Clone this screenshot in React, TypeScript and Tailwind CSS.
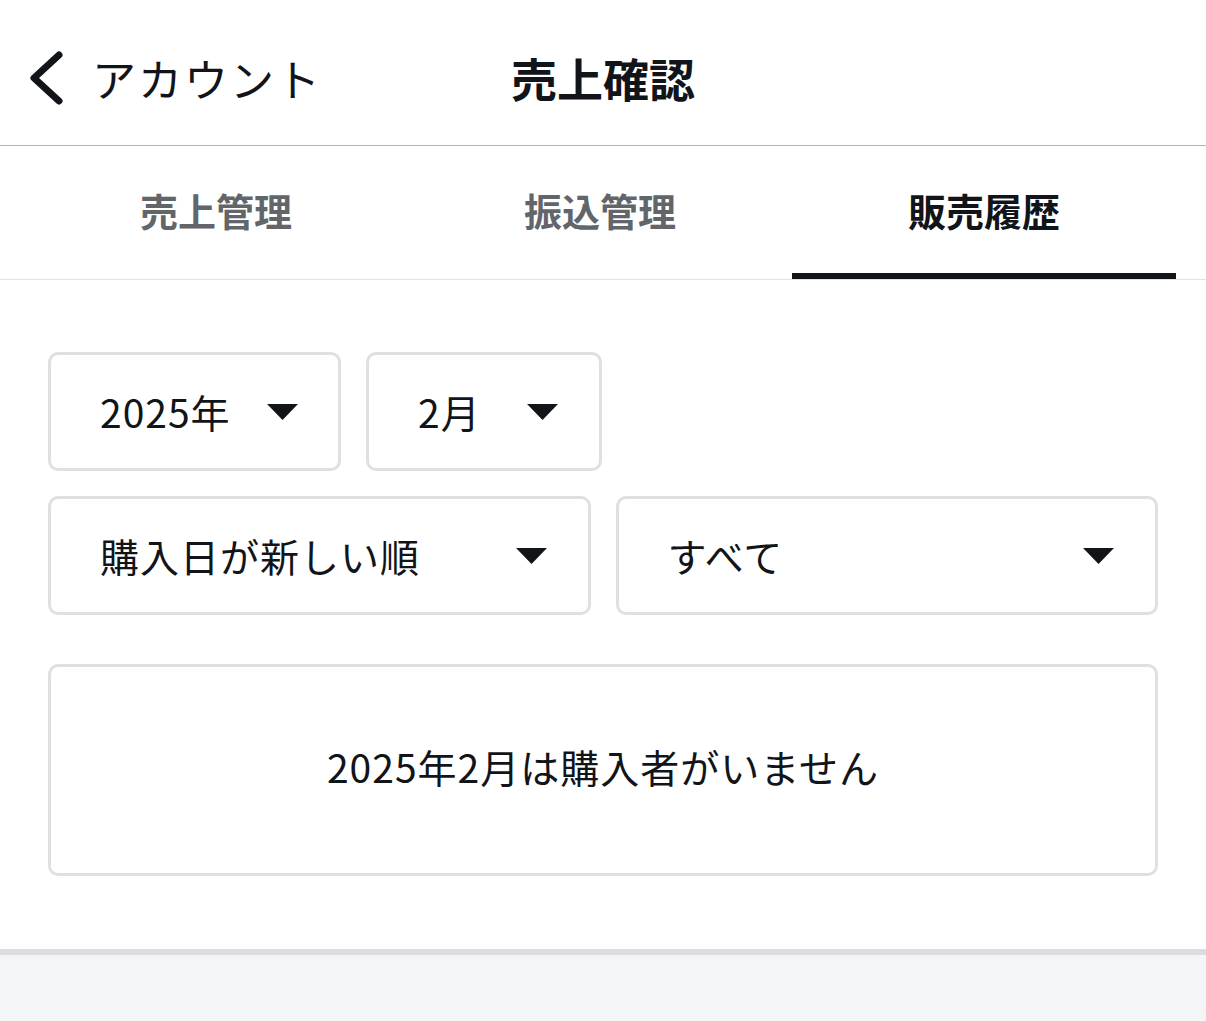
import { useState } from 'react';

const TABS = ['売上管理', '振込管理', '販売履歴'];

function Caret() {
  return (
    <svg width="31" height="16" viewBox="0 0 31 16" className="shrink-0">
      <path d="M0 0h31L15.5 16z" fill="#111418" />
    </svg>
  );
}

function Select({ label, className }: { label: string; className: string }) {
  return (
    <button
      className={`flex items-center justify-between rounded-[10px] border-[3px] border-[#e0e0e0] bg-white pl-[49px] text-[39px] text-[#111418] ${className}`}
    >
      <span className="leading-none tracking-[1px]">{label}</span>
      <Caret />
    </button>
  );
}

export default function App() {
  const [tab, setTab] = useState(2);

  return (
    <div className="flex min-h-[1021px] flex-col bg-white font-['Hiragino_Sans','Noto_Sans_CJK_JP',sans-serif]">
      {/* header */}
      <header className="grid h-[146px] grid-cols-[1fr_auto_1fr] items-center border-b-[1.5px] border-[#b4b4b4] pt-[10px]">
        <button className="flex items-center pl-[28px] text-[#111418]">
          <svg width="36" height="54" viewBox="0 0 36 54">
            <path d="M31 4L6 27l25 23" fill="none" stroke="#111418" strokeWidth="7" strokeLinecap="round" strokeLinejoin="round" />
          </svg>
          <span className="ml-[28px] text-[44px] tracking-[2px]">アカウント</span>
        </button>
        <h1 className="text-[46px] font-bold text-[#111418]">売上確認</h1>
        <div />
      </header>

      {/* tabs */}
      <nav className="flex border-b border-[#e3e3e3] pl-6 pr-[30px]">
        {TABS.map((t, i) => (
          <button
            key={t}
            onClick={() => setTab(i)}
            className={`flex h-[133px] flex-1 items-center justify-center border-b-[6px] text-[38px] font-bold ${
              tab === i ? 'border-[#111418] text-[#111418]' : 'border-transparent text-[#62666b]'
            }`}
          >
            {t}
          </button>
        ))}
      </nav>

      {/* filters */}
      <main className="px-12 pt-[72px] pb-[73px]">
        <div className="flex gap-[25px]">
          <Select label="2025年" className="h-[119px] w-[293px] pr-[40px]" />
          <Select label="2月" className="h-[119px] w-[236px] pr-[41px]" />
        </div>
        <div className="mt-[25px] grid grid-cols-2 gap-[25px]">
          <Select label="購入日が新しい順" className="h-[119px] pr-[41px]" />
          <Select label="すべて" className="h-[119px] pr-[41px]" />
        </div>

        <div className="mt-[49px] flex h-[212px] items-center justify-center rounded-[10px] border-[3px] border-[#e0e0e0] pb-[8px] text-[39px] tracking-[1px] text-[#111418]">
          2025年2月は購入者がいません
        </div>
      </main>

      <div className="flex-1 border-t-[6px] border-[#dcdde0] bg-[#f4f5f7]" />
    </div>
  );
}
